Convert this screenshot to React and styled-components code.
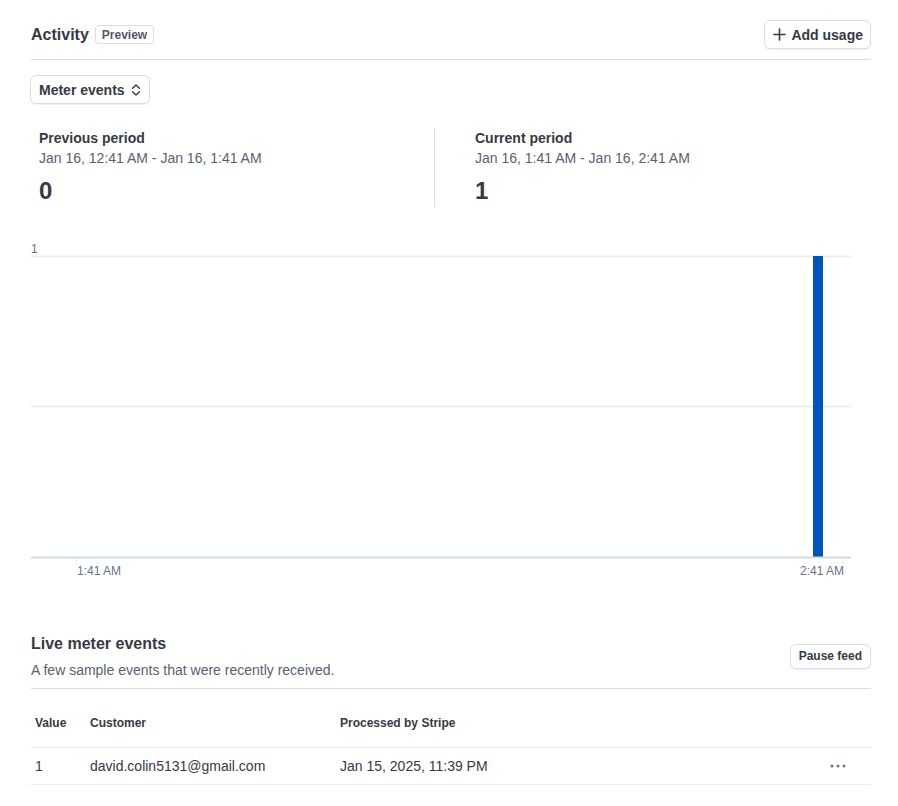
import React from "react"
import styled, { createGlobalStyle } from "styled-components"

const GlobalStyle = createGlobalStyle`
  html, body {
    margin: 0;
    padding: 0;
    background: #ffffff;
  }
  body {
    font-family: "Liberation Sans", Arial, sans-serif;
    color: #353a44;
  }
`

const PlusIcon = () => (
  <svg width="13" height="13" viewBox="0 0 13 13" fill="none">
    <path d="M6.5 1v11M1 6.5h11" stroke="#353a44" strokeWidth="1.6" strokeLinecap="round" />
  </svg>
)

const UpDownIcon = () => (
  <svg width="10" height="12" viewBox="0 0 10 12" fill="none">
    <path d="M1.5 4.3L5 1l3.5 3.3M1.5 7.7L5 11l3.5-3.3" stroke="#353a44" strokeWidth="1.4" strokeLinecap="round" strokeLinejoin="round" />
  </svg>
)

const DotsIcon = () => (
  <svg width="16" height="4" viewBox="0 0 16 4">
    <circle cx="2" cy="2" r="1.5" fill="#687385" />
    <circle cx="8" cy="2" r="1.5" fill="#687385" />
    <circle cx="14" cy="2" r="1.5" fill="#687385" />
  </svg>
)

function UsageChart() {
  return (
    <ChartSvg width="840" height="360" viewBox="0 0 840 360">
      <text x="0" y="21" fontSize="12" fill="#687385" fontFamily="Liberation Sans, Arial, sans-serif">1</text>
      <line x1="0" y1="24.5" x2="820" y2="24.5" stroke="#ebeef1" strokeWidth="2" />
      <line x1="0" y1="174.5" x2="820" y2="174.5" stroke="#ebeef1" strokeWidth="2" />
      <rect x="782" y="24" width="10" height="301" fill="#0055bc" />
      <line x1="0" y1="325.5" x2="820" y2="325.5" stroke="#d5dbe1" strokeWidth="2" />
      <line x1="45.5" y1="325" x2="45.5" y2="332" stroke="#ebeef1" strokeWidth="1" />
      <line x1="812.5" y1="325" x2="812.5" y2="332" stroke="#ebeef1" strokeWidth="1" />
      <text x="46" y="343" fontSize="12" fill="#687385" fontFamily="Liberation Sans, Arial, sans-serif">1:41 AM</text>
      <text x="813" y="343" fontSize="12" fill="#687385" textAnchor="end" fontFamily="Liberation Sans, Arial, sans-serif">2:41 AM</text>
    </ChartSvg>
  )
}

export default function App() {
  return (
    <Page>
      <GlobalStyle />
      <Header>
        <TitleGroup>
          <Title>Activity</Title>
          <Badge>Preview</Badge>
        </TitleGroup>
        <Button>
          <PlusIcon />
          Add usage
        </Button>
      </Header>

      <Toolbar>
        <Button $wide>
          Meter events
          <UpDownIcon />
        </Button>
      </Toolbar>

      <Stats>
        <StatColumn>
          <StatLabel>Previous period</StatLabel>
          <StatRange>Jan 16, 12:41 AM - Jan 16, 1:41 AM</StatRange>
          <StatValue>0</StatValue>
        </StatColumn>
        <StatColumn $divided>
          <StatLabel>Current period</StatLabel>
          <StatRange>Jan 16, 1:41 AM - Jan 16, 2:41 AM</StatRange>
          <StatValue>1</StatValue>
        </StatColumn>
      </Stats>

      <UsageChart />

      <SectionHeader>
        <div>
          <Title>Live meter events</Title>
          <Subtitle>A few sample events that were recently received.</Subtitle>
        </div>
        <Button $small>Pause feed</Button>
      </SectionHeader>

      <Table>
        <colgroup>
          <col style={{ width: 55 }} />
          <col style={{ width: 250 }} />
          <col />
          <col style={{ width: 48 }} />
        </colgroup>
        <thead>
          <tr>
            <Th>Value</Th>
            <Th>Customer</Th>
            <Th>Processed by Stripe</Th>
            <Th />
          </tr>
        </thead>
        <tbody>
          <tr>
            <Td>1</Td>
            <Td>david.colin5131@gmail.com</Td>
            <Td>Jan 15, 2025, 11:39 PM</Td>
            <Td $action>
              <DotsIcon />
            </Td>
          </tr>
        </tbody>
      </Table>
    </Page>
  )
}

const Page = styled.div`
  width: 840px;
  padding: 20px 0 0 31px;
`

const Header = styled.div`
  display: flex;
  align-items: center;
  justify-content: space-between;
  padding-bottom: 10px;
  border-bottom: 1px solid #d8dee4;
`

const TitleGroup = styled.div`
  display: flex;
  align-items: center;
  gap: 6px;
`

const Title = styled.div`
  font-size: 16px;
  line-height: 24px;
  font-weight: 700;
  color: #353a44;
`

const Badge = styled.span`
  display: inline-flex;
  align-items: center;
  height: 17px;
  padding: 0 6px;
  border: 1px solid #d8dee4;
  border-radius: 4px;
  font-size: 12px;
  font-weight: 700;
  color: #545969;
`

const Button = styled.button`
  display: inline-flex;
  align-items: center;
  gap: ${(p) => (p.$small ? "0" : p.$wide ? "6px" : "5px")};
  height: ${(p) => (p.$small ? "25px" : "29px")};
  padding: ${(p) => (p.$small ? "0 8px" : p.$wide ? "0 8px" : "0 7px 0 8px")};
  margin-left: ${(p) => (p.$wide ? "-1px" : "0")};
  background: #ffffff;
  border: 1px solid #d8dee4;
  border-radius: 6px;
  box-shadow: 0 1px 1px rgba(0, 0, 0, 0.06);
  font-family: inherit;
  font-size: ${(p) => (p.$small ? "12px" : "14px")};
  font-weight: 700;
  color: #353a44;
  cursor: pointer;
`

const Toolbar = styled.div`
  display: flex;
  margin-top: 15px;
`

const Stats = styled.div`
  display: grid;
  grid-template-columns: 403px 1fr;
  margin-top: 24px;
`

const StatColumn = styled.div`
  padding-left: ${(p) => (p.$divided ? "40px" : "8px")};
  border-left: ${(p) => (p.$divided ? "1px solid #d8dee4" : "none")};
`

const StatLabel = styled.div`
  font-size: 14px;
  line-height: 20px;
  font-weight: 700;
  color: #353a44;
`

const StatRange = styled.div`
  font-size: 14px;
  line-height: 20px;
  color: #596171;
`

const StatValue = styled.div`
  margin-top: 7px;
  font-size: 24px;
  line-height: 32px;
  font-weight: 700;
  color: #353a44;
`

const ChartSvg = styled.svg`
  display: block;
  margin-top: 25px;
`

const SectionHeader = styled.div`
  display: flex;
  align-items: center;
  justify-content: space-between;
  margin-top: 40px;
  padding-bottom: 8px;
  border-bottom: 1px solid #d8dee4;
`

const Subtitle = styled.div`
  margin-top: 4px;
  font-size: 14px;
  line-height: 20px;
  color: #596171;
`

const Table = styled.table`
  width: 840px;
  border-collapse: collapse;
  table-layout: fixed;
`

const Th = styled.th`
  padding: 26px 4px 16px;
  border-bottom: 1px solid #ebeef1;
  text-align: left;
  font-size: 12px;
  line-height: 16px;
  font-weight: 700;
  color: #353a44;
`

const Td = styled.td`
  padding: 8px 4px;
  border-bottom: 1px solid #ebeef1;
  text-align: ${(p) => (p.$action ? "center" : "left")};
  font-size: 14px;
  line-height: 20px;
  color: #353a44;

  svg {
    display: block;
    margin: 0 auto;
    position: relative;
    left: -9px;
  }
`
